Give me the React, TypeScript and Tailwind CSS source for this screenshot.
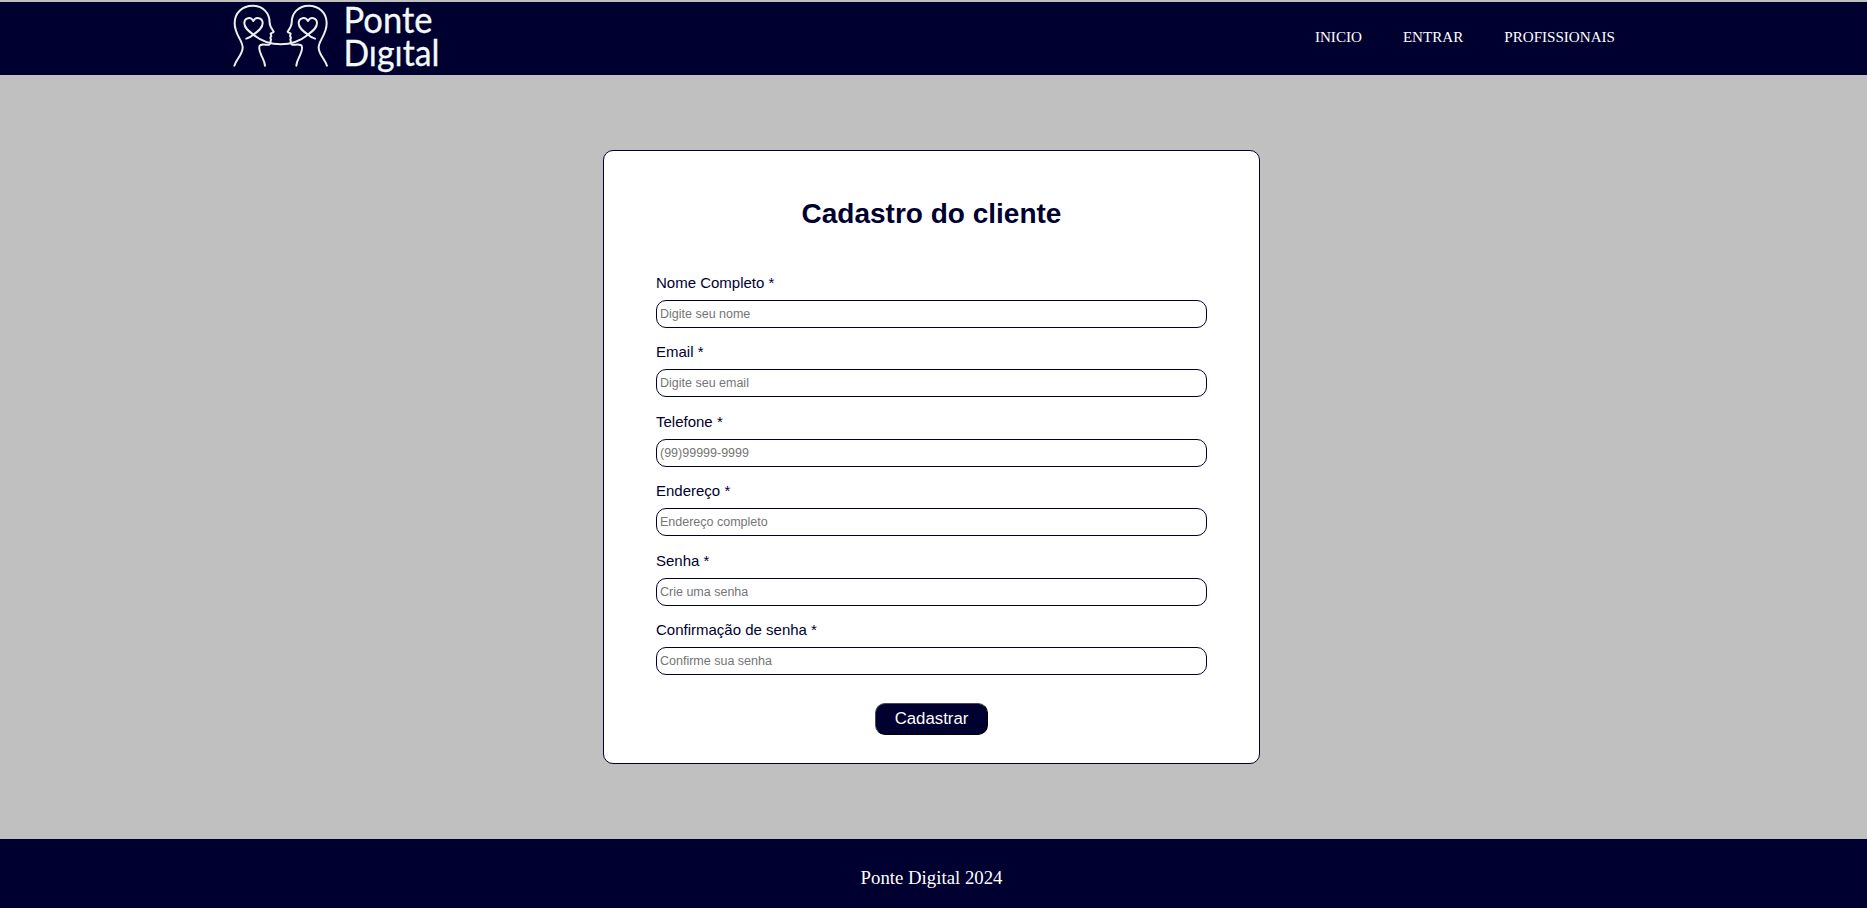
const fields = [
  { id: "nome", label: "Nome Completo *", placeholder: "Digite seu nome", type: "text" },
  { id: "email", label: "Email *", placeholder: "Digite seu email", type: "email" },
  { id: "telefone", label: "Telefone *", placeholder: "(99)99999-9999", type: "tel" },
  { id: "endereco", label: "Endereço *", placeholder: "Endereço completo", type: "text" },
  { id: "senha", label: "Senha *", placeholder: "Crie uma senha", type: "password" },
  { id: "confirmacao", label: "Confirmação de senha *", placeholder: "Confirme sua senha", type: "password" },
];

function Head() {
  return (
    <>
      <path d="M13 197C18 180 38 162 38 143C38 120 14 105 14 70C14 38 38 17 68 17C99 17 119 40 119 68C119 79 127 88 131 95C130 99 123 98 122 101L124 108L121 113L123 119C120 124 124 133 117 134C108 135 99 132 92 135C83 140 89 155 94 166C99 177 104 184 105 197" />
      <path d="M49 116C56 114 64 109 70 104C84 94 98 84 98 70C98 52 77 49 70 63C63 49 43 52 43 70C43 84 57 94 70 104" />
    </>
  );
}

function Logo() {
  return (
    <svg className="block h-[73px] w-[215px] overflow-visible" viewBox="230 2 215 73" role="img" aria-label="Ponte Digital">
      <g transform="translate(230 0) scale(0.3333)" fill="none" stroke="#e6f3f0" strokeWidth="6" strokeLinecap="round" strokeLinejoin="round">
        <Head />
        <g transform="translate(304 0) scale(-1 1)"><Head /></g>
        <path d="M70 104C95 124 123 133 152 133C181 133 209 124 234 104" />
      </g>
      <g fill="#f2faf8" stroke="#f2faf8" strokeWidth="0.3" fontFamily="Lato, sans-serif">
        <text x="343.500" y="33" fontSize="36" textLength="89" lengthAdjust="spacingAndGlyphs">Ponte</text>
        <text x="343.500" y="66" fontSize="36" textLength="96" lengthAdjust="spacingAndGlyphs">Dıgıtal</text>
      </g>
    </svg>
  );
}

export default function App() {
  return (
    <div className="flex h-[908px] flex-col bg-[#c0c0c0] pt-0.5">
      <header className="flex h-[73px] shrink-0 items-start justify-between bg-[#000030] pr-[252px] pl-[230px]">
        <Logo />
        <nav className="flex gap-[41px] pt-[26px] font-['Liberation_Serif',serif] text-[15.1px] leading-[18px] text-white">
          <a href="#inicio">INICIO</a>
          <a href="#entrar">ENTRAR</a>
          <a href="#profissionais">PROFISSIONAIS</a>
        </nav>
      </header>
      <main className="flex flex-1 justify-center pt-[75px] pr-1 font-['Liberation_Sans',sans-serif] text-[#000030]">
        <form className="flex h-[614px] w-[657px] flex-col rounded-[10px] border border-[#000030] bg-white px-[52px]">
          <h1 className="mt-[47px] text-center text-[28px] leading-8 font-bold">Cadastro do cliente</h1>
          <div className="mt-[43px]">
            {fields.map((f) => (
              <div key={f.id} className="h-[69.4px]">
                <label htmlFor={f.id} className="block h-[27px] pt-px text-[15px] leading-[18px]">{f.label}</label>
                <input
                  id={f.id}
                  type={f.type}
                  placeholder={f.placeholder}
                  className="block h-[28px] w-full rounded-[10px] border border-[#000030] bg-white px-[3px] text-[12.5px] placeholder:text-[#757575]"
                />
              </div>
            ))}
          </div>
          <button type="button" className="mt-[14px] h-8 w-[113px] self-center rounded-[10px] border border-t-[#4c4c4c] border-r-black border-b-black border-l-[#4c4c4c] bg-[#000030] text-[16.8px] leading-5 text-white">
            Cadastrar
          </button>
        </form>
      </main>
      <footer className="flex h-[69px] shrink-0 items-start justify-center bg-[#000030] pt-[28px] pr-1 font-['Liberation_Serif',serif] text-[18.8px] leading-[22px] text-white">
        Ponte Digital 2024
      </footer>
    </div>
  );
}
